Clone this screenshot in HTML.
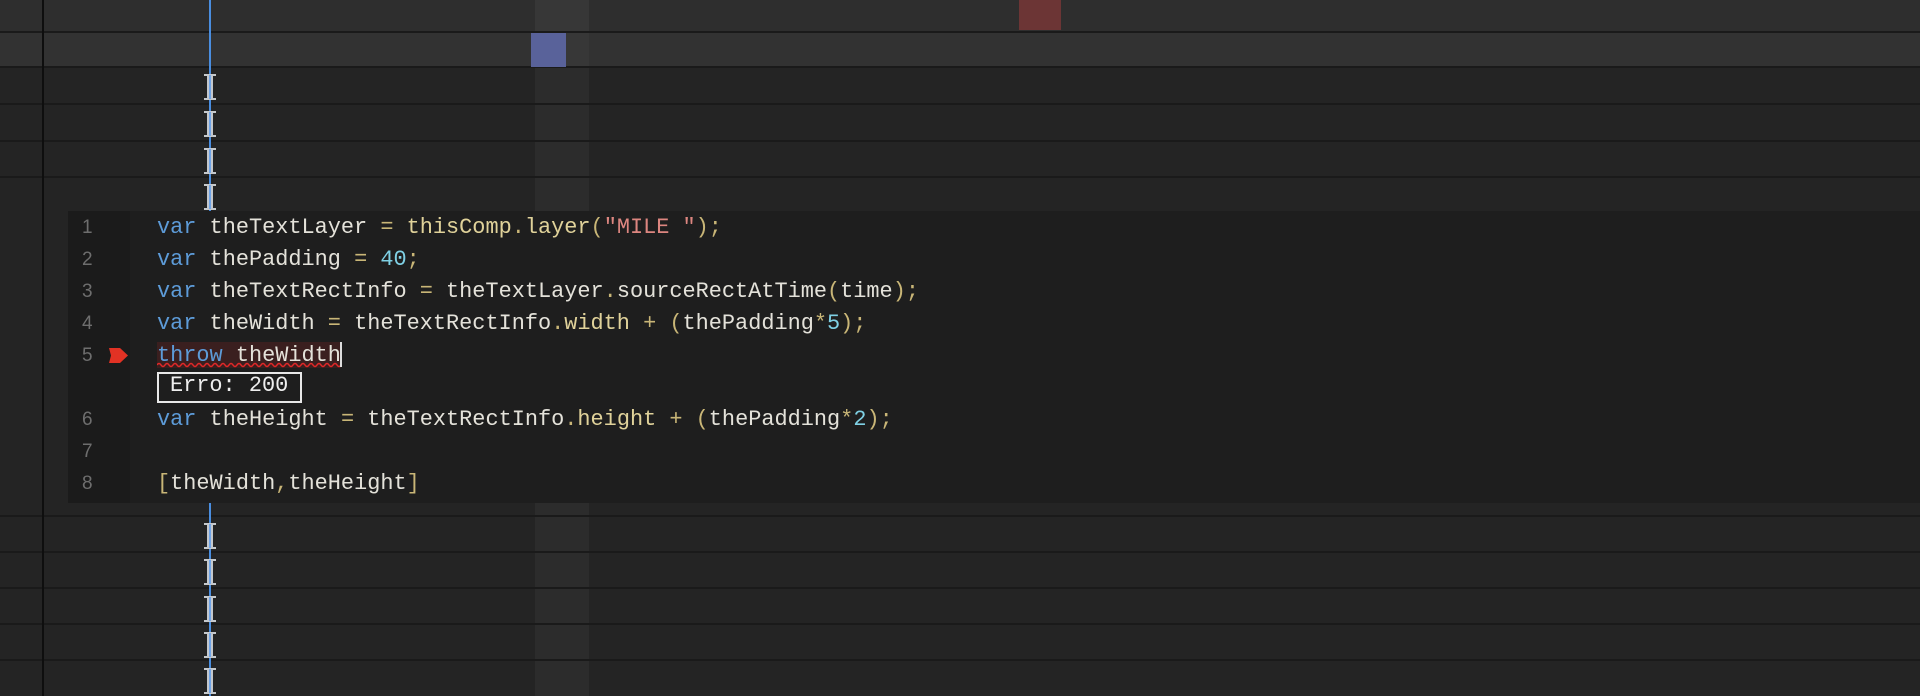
<!DOCTYPE html>
<html><head><meta charset="utf-8">
<style>
html,body{margin:0;padding:0;width:1920px;height:696px;overflow:hidden;background:#242424;}
.a{position:absolute;}
.row{position:absolute;left:0;width:1920px;}
.sep{position:absolute;left:0;width:1920px;height:2px;background:#1a1a1a;}
.code{position:absolute;left:157px;font-family:"Liberation Mono",monospace;font-size:21.9px;white-space:pre;line-height:32px;color:#e4e2da;}
.ln{position:absolute;left:82px;font-family:"Liberation Sans",sans-serif;font-size:19px;color:#6e6e6e;line-height:32px;}
.k{color:#5d9bd8}.p{color:#c9b677}.s{color:#dd8680}.n{color:#7fd0e4}.m{color:#e0d29a}
</style></head><body>
<div class="row" style="top:0;height:32px;background:#2e2e2e"></div>
<div class="row" style="top:32px;height:35px;background:#323232"></div>
<div class="row" style="top:67px;height:144px;background:#242424"></div>
<div class="row" style="top:503px;height:193px;background:#242424"></div>
<div class="a" style="left:535px;top:0;width:54px;height:67px;background:#373737"></div>
<div class="a" style="left:535px;top:67px;width:54px;height:144px;background:#2c2c2c"></div>
<div class="a" style="left:535px;top:503px;width:54px;height:193px;background:#2c2c2c"></div>
<div class="sep" style="top:31px"></div>
<div class="sep" style="top:66px"></div>
<div class="sep" style="top:103px"></div>
<div class="sep" style="top:140px"></div>
<div class="sep" style="top:176px"></div>
<div class="sep" style="top:515px"></div>
<div class="sep" style="top:551px"></div>
<div class="sep" style="top:587px"></div>
<div class="sep" style="top:623px"></div>
<div class="sep" style="top:659px"></div>
<div class="a" style="left:531px;top:33px;width:35px;height:34px;background:#59629a"></div>
<div class="a" style="left:1019px;top:0;width:42px;height:30px;background:#6c3535"></div>
<div class="a" style="left:42px;top:0;width:2px;height:696px;background:#0e0e0e"></div>
<div class="a" style="left:209px;top:0;width:2px;height:696px;background:#4a8ee0"></div>

<svg class="a" style="left:0;top:0" width="1920" height="696">
<g stroke="#c4c8cc" stroke-width="2" fill="none">
<path d="M204 75H216M204 99H216"/><path d="M204 112H216M204 136H216"/><path d="M204 149H216M204 173H216"/><path d="M204 185H216M204 209H216"/>
<path d="M204 524H216M204 548H216"/><path d="M204 560H216M204 584H216"/><path d="M204 597H216M204 621H216"/><path d="M204 633H216M204 657H216"/><path d="M204 669H216M204 693H216"/>
</g>
<g stroke="#c4c8cc" stroke-width="6">
<path d="M210 75V99M210 112V136M210 149V173M210 185V209M210 524V548M210 560V584M210 597V621M210 633V657M210 669V693"/>
</g>
<g stroke="#6fa4e8" stroke-width="2">
<path d="M210 75V99M210 112V136M210 149V173M210 185V209M210 524V548M210 560V584M210 597V621M210 633V657M210 669V693"/>
</g>
</svg>

<div class="a" style="left:68px;top:211px;width:62px;height:292px;background:#1b1b1b"></div>
<div class="a" style="left:130px;top:211px;width:1790px;height:292px;background:#1e1e1e"></div>
<div class="a" style="left:157px;top:342px;width:184px;height:26px;background:#3a1f1f"></div>
<svg class="a" style="left:157px;top:362px" width="186" height="6"><path d="M0 3 Q2 0 4 3 T8 3 T12 3 T16 3 T20 3 T24 3 T28 3 T32 3 T36 3 T40 3 T44 3 T48 3 T52 3 T56 3 T60 3 T64 3 T68 3 T72 3 T76 3 T80 3 T84 3 T88 3 T92 3 T96 3 T100 3 T104 3 T108 3 T112 3 T116 3 T120 3 T124 3 T128 3 T132 3 T136 3 T140 3 T144 3 T148 3 T152 3 T156 3 T160 3 T164 3 T168 3 T172 3 T176 3 T180 3 T184 3" stroke="#e02828" stroke-width="1.5" fill="none"/></svg>
<div class="a" style="left:340px;top:342px;width:2px;height:25px;background:#ddd"></div>
<svg class="a" style="left:109px;top:347px" width="20" height="17"><path d="M0 1H11L19 8.5L11 16H0L2 8.5Z" fill="#e23224"/></svg>
<div class="a" style="left:157px;top:372px;width:141px;height:27px;border:2px solid #e8e8e8;"></div>
<div class="code" style="left:170px;top:370px;color:#eee">Erro: 200</div>

<div class="ln" style="top:212px">1</div>
<div class="ln" style="top:244px">2</div>
<div class="ln" style="top:276px">3</div>
<div class="ln" style="top:308px">4</div>
<div class="ln" style="top:340px">5</div>
<div class="ln" style="top:404px">6</div>
<div class="ln" style="top:436px">7</div>
<div class="ln" style="top:468px">8</div>

<div class="code" style="top:212px"><span class="k">var</span> theTextLayer <span class="p">=</span> <span class="m">thisComp</span><span class="p">.</span><span class="m">layer</span><span class="p">(</span><span class="s">"MILE "</span><span class="p">);</span></div>
<div class="code" style="top:244px"><span class="k">var</span> thePadding <span class="p">=</span> <span class="n">40</span><span class="p">;</span></div>
<div class="code" style="top:276px"><span class="k">var</span> theTextRectInfo <span class="p">=</span> theTextLayer<span class="p">.</span>sourceRectAtTime<span class="p">(</span>time<span class="p">);</span></div>
<div class="code" style="top:308px"><span class="k">var</span> theWidth <span class="p">=</span> theTextRectInfo<span class="p">.</span><span class="m">width</span> <span class="p">+ (</span>thePadding<span class="p">*</span><span class="n">5</span><span class="p">);</span></div>
<div class="code" style="top:340px"><span class="k">throw</span> theWidth</div>
<div class="code" style="top:404px"><span class="k">var</span> theHeight <span class="p">=</span> theTextRectInfo<span class="p">.</span><span class="m">height</span> <span class="p">+ (</span>thePadding<span class="p">*</span><span class="n">2</span><span class="p">);</span></div>
<div class="code" style="top:468px"><span class="p">[</span>theWidth<span class="p">,</span>theHeight<span class="p">]</span></div>
</body></html>
